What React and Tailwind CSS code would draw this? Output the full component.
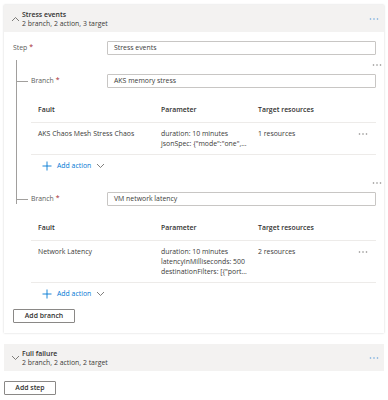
import React from "react";

const font = { fontFamily: "'Open Sans', 'Noto Sans', sans-serif" };

function Dots({ color = "#8a8886" }) {
  return (
    <svg width="10" height="4" viewBox="0 0 10 4">
      <circle cx="1.5" cy="2" r="0.8" fill={color} />
      <circle cx="5" cy="2" r="0.8" fill={color} />
      <circle cx="8.5" cy="2" r="0.8" fill={color} />
    </svg>
  );
}

function Chevron({ up }) {
  return (
    <svg width="9" height="6" viewBox="0 0 9 6">
      <path d={up ? "M1 5 L4.5 1.5 L8 5" : "M1 1 L4.5 4.5 L8 1"} fill="none" stroke="#605e5c" strokeWidth="0.8" />
    </svg>
  );
}

function Header({ title, sub, up }) {
  return (
    <div className="h-[27px] bg-[#f3f2f1] flex items-center pl-[5px] pr-[5px]">
      <div className="w-[13px] flex justify-center"><Chevron up={up} /></div>
      <div className="flex flex-col leading-[9px]">
        <span className="text-[6.9px] font-semibold text-[#323130]">{title}</span>
        <span className="text-[6.9px] text-[#3b3a39]">{sub}</span>
      </div>
      <div className="ml-auto"><Dots color="#6ca6dc" /></div>
    </div>
  );
}

function Input({ value }) {
  return (
    <div className="w-[269px] h-[14px] border border-[#c8c6c4] rounded-[1px] flex items-center pl-[6px] text-[6.9px] text-[#3b3a39]">
      {value}
    </div>
  );
}

function Table({ fault, params, target }) {
  return (
    <div className="mt-[11px] ml-[15px] w-[345px] text-[6.9px] text-[#3b3a39]">
      <div className="h-[24px] flex items-center border-b border-[#edebe9] font-semibold text-[#323130]">
        <div className="w-[130px] pl-[7px]">Fault</div>
        <div className="w-[97px]">Parameter</div>
        <div>Target resources</div>
      </div>
      <div className="flex border-b border-[#edebe9] pt-[6px] pb-[5px] leading-[10px]">
        <div className="w-[130px] pl-[7px]">{fault}</div>
        <div className="w-[97px] flex flex-col">
          {params.map((p, i) => (
            <span key={i} className="whitespace-nowrap">{p}</span>
          ))}
        </div>
        <div className="w-[100px]">{target}</div>
        <div className="pt-[3px]"><Dots /></div>
      </div>
      <div className="h-[22px] flex items-center pl-[11px] gap-[5px]">
        <svg width="10" height="10" viewBox="0 0 10 10">
          <path d="M5 0.5 V9.5 M0.5 5 H9.5" stroke="#0078d4" strokeWidth="0.9" />
        </svg>
        <span className="text-[#0078d4] text-[6.9px]">Add action</span>
        <Chevron />
      </div>
    </div>
  );
}

function BranchRow({ value }) {
  return (
    <div className="flex items-center h-[14px] mt-[4px]">
      <div className="w-[12px] h-[1px] bg-[#a19f9d]" />
      <div className="w-[79px] pl-[3px] text-[6.9px] text-[#605e5c]">
        Branch <span className="text-[#a4262c]">*</span>
      </div>
      <Input value={value} />
    </div>
  );
}

export default function App() {
  return (
    <div className="w-[388px] h-[400px] bg-white px-[4px] pt-[5px]" style={font}>
      <div className="shadow-[0_0_2px_rgba(0,0,0,0.18)]">
        <Header title="Stress events" sub="2 branch, 2 action, 3 target" up />
        <div className="bg-white pl-[9px] pb-[10px]">
          <div className="flex items-center h-[14px] mt-[9px]">
            <div className="w-[94px] text-[6.9px] text-[#605e5c]">
              Step <span className="text-[#a4262c]">*</span>
            </div>
            <Input value="Stress events" />
          </div>
          <div className="relative ml-[3px]">
            <div className="absolute left-0 top-0 w-[1px] h-[144px] bg-[#a19f9d]" />
            <div className="h-[10px] mt-[5px] flex items-center justify-end pr-[2px]"><Dots /></div>
            <BranchRow value="AKS memory stress" />
            <Table
              fault="AKS Chaos Mesh Stress Chaos"
              params={["duration: 10 minutes", 'jsonSpec: {"mode":"one",...']}
              target="1 resources"
            />
            <div className="h-[10px] mt-[1px] flex items-center justify-end pr-[2px]"><Dots /></div>
            <BranchRow value="VM network latency" />
            <Table
              fault="Network Latency"
              params={["duration: 10 minutes", "latencyInMilliseconds: 500", 'destinationFilters: [{"port...']}
              target="2 resources"
            />
          </div>
          <button className="mt-[4px] w-[62px] h-[14px] border border-[#8a8886] rounded-[1px] text-[6.9px] font-semibold text-[#323130] flex items-center justify-center">
            Add branch
          </button>
        </div>
      </div>
      <div className="mt-[11px]">
        <Header title="Full failure" sub="2 branch, 2 action, 2 target" />
      </div>
      <button className="mt-[10px] w-[52px] h-[14px] border border-[#8a8886] rounded-[1px] text-[6.9px] font-semibold text-[#323130] flex items-center justify-center">
        Add step
      </button>
    </div>
  );
}
